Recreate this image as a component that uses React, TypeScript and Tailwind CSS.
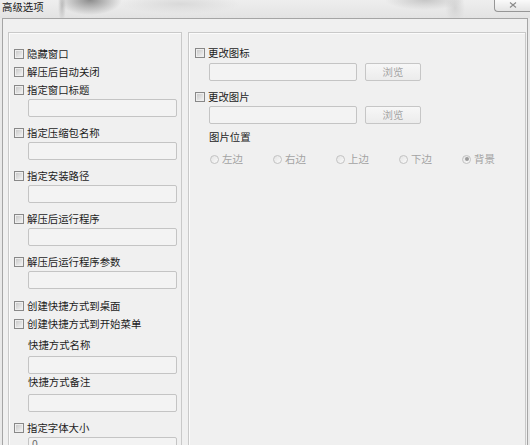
import React from "react";

// 高级选项 dialog (Win7 style, scaled)

const Checkbox = () => (
	<span className="w-[10px] h-[10px] shrink-0 border border-[#888888] bg-gradient-to-br from-[#c4c4c4] to-[#f7f7f7] shadow-[inset_0_0_0_1px_#eeeeee]" />
);

function CheckRow({ label }: { label: string }) {
	return (
		<div className="h-[18px] flex items-center gap-[3px] leading-none">
			<Checkbox />
			<span>{label}</span>
		</div>
	);
}

function TextBox({ className = "", value }: { className?: string; value?: string }) {
	return (
		<div
			className={`h-[18px] border border-[#c4c4c4] bg-[#f3f3f3] rounded-[2px] flex px-[3px] leading-none text-[#6a6a6a] ${className}`}
		>
			{value}
		</div>
	);
}

function Label({ text, className = "" }: { text: string; className?: string }) {
	return <div className={`h-[14px] flex items-center leading-none ${className}`}>{text}</div>;
}

function Radio({ label, checked }: { label: string; checked?: boolean }) {
	return (
		<div className="w-[63.5px] flex items-center gap-[3px] leading-none text-[#a3a3a3]">
			<span className="w-[9px] h-[9px] rounded-full border border-[#c2c2c2] bg-gradient-to-br from-[#e4e4e4] to-[#fafafa] flex items-center justify-center">
				{checked && <span className="w-[4px] h-[4px] rounded-full bg-[#9c9c9c]" />}
			</span>
			<span>{label}</span>
		</div>
	);
}

function BrowseButton() {
	return (
		<div className="w-[56px] h-[18px] ml-[8px] border border-[#c6c6c6] rounded-[2px] bg-gradient-to-b from-[#f7f7f7] to-[#ececec] flex items-center justify-center leading-none text-[#a5a5a5]">
			浏览
		</div>
	);
}

export default function App() {
	return (
		<div className="w-[530px] h-[445px] overflow-hidden bg-[#e9e9e9] font-['Noto_Sans_CJK_SC',sans-serif] text-[10.4px] text-[#1c1c1c]">
			{/* title bar */}
			<div className="h-[18px] flex items-start bg-[image:radial-gradient(ellipse_32px_15px_at_90px_0px,#8c8c8c,transparent),radial-gradient(ellipse_4px_16px_at_62px_6px,#bdbdbd,transparent),radial-gradient(ellipse_60px_10px_at_180px_4px,#d9d9d9,transparent),radial-gradient(ellipse_40px_10px_at_425px_0px,#c6c6c6,transparent),radial-gradient(ellipse_10px_16px_at_455px_8px,#d4d4d4,transparent),linear-gradient(#eeeeee,#e3e3e3)]">
				<span className="pl-[2px] pt-[2px] leading-none text-[#1a1a1a]">高级选项</span>
				<div className="ml-auto w-[36px] h-[12px] border border-t-0 border-r-0 border-[#969696] rounded-bl-[4px] bg-gradient-to-b from-[#fafafa] to-[#e4e4e4] flex items-center justify-center">
					<svg width="8" height="6" viewBox="0 0 8 6" className="mt-[-2px]">
						<path d="M1 0.5 L7 5.5 M7 0.5 L1 5.5" stroke="#8a8a8a" strokeWidth="1.1" fill="none" />
					</svg>
				</div>
			</div>

			{/* body */}
			<div className="mx-[2px] h-[427px] border border-b-0 border-[#a5a5a5] bg-[#f0f0f0] flex gap-[6px] pt-[13px] pl-[5px] pr-[1px]">
				{/* left group */}
				<div className="w-[174px] h-[430px] border border-[#c9c9c9] shadow-[inset_1px_1px_0_#fbfbfb] pl-[5px] pt-[12px] flex flex-col">
					<CheckRow label="隐藏窗口" />
					<CheckRow label="解压后自动关闭" />
					<CheckRow label="指定窗口标题" />
					<TextBox className="ml-[14px] w-[149px]" />

					<div className="mt-[7px]">
						<CheckRow label="指定压缩包名称" />
					</div>
					<TextBox className="ml-[14px] w-[149px]" />

					<div className="mt-[7px]">
						<CheckRow label="指定安装路径" />
					</div>
					<TextBox className="ml-[14px] w-[149px]" />

					<div className="mt-[7px]">
						<CheckRow label="解压后运行程序" />
					</div>
					<TextBox className="ml-[14px] w-[149px]" />

					<div className="mt-[7px]">
						<CheckRow label="解压后运行程序参数" />
					</div>
					<TextBox className="ml-[14px] w-[149px]" />

					<div className="mt-[8px]">
						<CheckRow label="创建快捷方式到桌面" />
					</div>
					<CheckRow label="创建快捷方式到开始菜单" />

					<Label text="快捷方式名称" className="ml-[14px] mt-[5px]" />
					<TextBox className="ml-[14px] w-[149px] mt-[4px]" />
					<Label text="快捷方式备注" className="ml-[14px] mt-[1px]" />
					<TextBox className="ml-[14px] w-[149px] mt-[5px]" />

					<div className="mt-[7px]">
						<CheckRow label="指定字体大小" />
					</div>
					<TextBox className="ml-[14px] w-[149px] items-start pt-[1px]" value="0" />
				</div>

				{/* right group */}
				<div className="w-[338px] h-[430px] border border-[#c9c9c9] shadow-[inset_1px_1px_0_#fbfbfb] pl-[6px] pt-[11px] flex flex-col">
					<CheckRow label="更改图标" />
					<div className="flex mt-[1px] ml-[14px]">
						<TextBox className="w-[148px]" />
						<BrowseButton />
					</div>

					<div className="mt-[7px]">
						<CheckRow label="更改图片" />
					</div>
					<div className="flex ml-[14px]">
						<TextBox className="w-[148px]" />
						<BrowseButton />
					</div>

					<Label text="图片位置" className="ml-[14px] mt-[6px]" />
					<div className="flex h-[14px] mt-[8px] ml-[15px]">
						<Radio label="左边" />
						<Radio label="右边" />
						<Radio label="上边" />
						<Radio label="下边" />
						<Radio label="背景" checked />
					</div>
				</div>
			</div>
		</div>
	);
}
